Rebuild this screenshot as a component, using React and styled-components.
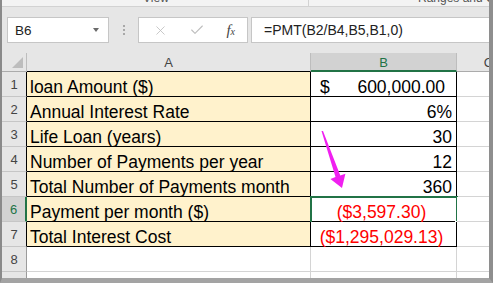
import styled, { createGlobalStyle } from 'styled-components';
import { X, Check } from 'lucide-react';

const GlobalStyle = createGlobalStyle`
  html, body {
    margin: 0;
    padding: 0;
    background: #fff;
    overflow: hidden;
  }
  * {
    box-sizing: border-box;
  }
`;

const GREEN = '#217346';
const GRID = '#d4d4d4';

const rows = [
  { label: 'loan Amount ($)', value: '600,000.00', kind: 'money' },
  { label: 'Annual Interest Rate', value: '6%' },
  { label: 'Life Loan (years)', value: '30' },
  { label: 'Number of Payments per year', value: '12' },
  { label: 'Total Number of Payments month', value: '360' },
  { label: 'Payment per month ($)', value: '($3,597.30)', kind: 'red', selected: true },
  { label: 'Total Interest Cost', value: '($1,295,029.13)', kind: 'red' },
];

const App = () => {
  return (
    <>
      <GlobalStyle />
      <Window>
        <RibbonStrip>
          <RibbonGroup $pad={141}>
            <RibbonLabel>View</RibbonLabel>
          </RibbonGroup>
          <RibbonDivider />
          <RibbonGroup $pad={109}>
            <RibbonLabel>Ranges and Conditional</RibbonLabel>
          </RibbonGroup>
        </RibbonStrip>

        <FormulaBar>
          <NameBox>
            <span>B6</span>
            <Caret />
          </NameBox>
          <Grip>
            <i />
            <i />
            <i />
          </Grip>
          <FxBox>
            <X size={15} strokeWidth={1.3} color='#bdbdbd' />
            <Check size={16} strokeWidth={1.6} color='#bdbdbd' />
            <Fx>
              f<sub>x</sub>
            </Fx>
          </FxBox>
          <FormulaInput>=PMT(B2/B4,B5,B1,0)</FormulaInput>
        </FormulaBar>

        <Sheet>
          <Corner>
            <CornerMark />
          </Corner>
          <ColHead $line='#000'>A</ColHead>
          <ColHead $selected>B</ColHead>
          <ColHead $line='#ababab'>C</ColHead>

          {rows.map((row, i) => (
            <Row key={i}>
              <RowHead $selected={row.selected} $edge='#000'>
                {i + 1}
              </RowHead>
              <Cell $fill='#fff2cc' $edge='#000' $pad='0 0 0 3px'>
                {row.label}
              </Cell>
              <Cell
                $edge='#000'
                $align={row.kind === 'red' ? 'center' : 'flex-end'}
                $color={row.kind === 'red' ? '#ff0000' : '#000'}
                $pad={row.kind === 'money' ? '0 11px 0 9px' : '0 4px 0 0'}
              >
                {row.kind === 'money' ? (
                  <>
                    <span>$</span>
                    <Spacer />
                    <span>{row.value}</span>
                  </>
                ) : (
                  row.value
                )}
                {row.selected && (
                  <Selection>
                    <FillHandle />
                  </Selection>
                )}
              </Cell>
              <Cell />
            </Row>
          ))}

          {['8', ''].map((n, i) => (
            <Row key={i}>
              <RowHead $edge='#9b9b9b'>{n}</RowHead>
              <Cell />
              <Cell />
              <Cell />
            </Row>
          ))}
        </Sheet>

        <Arrow width='40' height='70' viewBox='0 0 40 70'>
          <polygon
            points='6.5,6 8,6 25.3,50.5 30.4,48.7 27,63 15.4,53.9 20.5,52.1'
            fill='#f020f0'
          />
        </Arrow>
      </Window>
    </>
  );
};

export default App;

const Window = styled.div`
  position: relative;
  width: 493px;
  height: 283px;
  overflow: hidden;
  display: flex;
  flex-direction: column;
  background: #e6e6e6;
  border-left: 2px solid #8a8a8a;
  border-right: 4px solid #8e8e8e;
  border-bottom: 5px solid #a3a3a3;
  font-family: 'Liberation Sans', Arial, sans-serif;
`;

const RibbonStrip = styled.div`
  display: grid;
  grid-template-columns: 306px 1px 1fr;
  height: 7px;
  flex-shrink: 0;
  background: #f3f3f3;
  border-bottom: 1px solid #d2d2d2;
  overflow: hidden;
`;

const RibbonGroup = styled.div`
  padding-left: ${({ $pad }) => $pad}px;
  overflow: hidden;
`;

const RibbonLabel = styled.div`
  margin-top: -9px;
  font-size: 12px;
  line-height: 14px;
  color: #555;
  white-space: nowrap;
`;

const RibbonDivider = styled.div`
  background: #d2d2d2;
`;

const FormulaBar = styled.div`
  display: flex;
  align-items: flex-start;
  height: 46px;
  flex-shrink: 0;
  padding: 10px 0 0 5px;
`;

const NameBox = styled.div`
  display: flex;
  align-items: center;
  justify-content: space-between;
  width: 102px;
  height: 26px;
  padding: 0 9px 0 7px;
  background: #fff;
  border: 1px solid #c6c6c6;
  font-size: 13.5px;
  color: #222;
`;

const Caret = styled.div`
  width: 0;
  height: 0;
  border-left: 3.5px solid transparent;
  border-right: 3.5px solid transparent;
  border-top: 4px solid #6a6a6a;
`;

const Grip = styled.div`
  display: flex;
  flex-direction: column;
  gap: 2px;
  margin: 8px 13px 0 14px;

  i {
    display: block;
    width: 2px;
    height: 2px;
    background: #a8a8a8;
  }
`;

const FxBox = styled.div`
  display: flex;
  align-items: center;
  justify-content: space-between;
  width: 110px;
  height: 26px;
  padding: 0 12px 0 14px;
  background: #fff;
  border: 1px solid #c6c6c6;
`;

const Fx = styled.span`
  font-family: 'Liberation Serif', 'Times New Roman', serif;
  font-style: italic;
  font-size: 15px;
  color: #444;
  line-height: 1;

  sub {
    font-size: 10px;
    vertical-align: baseline;
  }
`;

const FormulaInput = styled.div`
  flex: 1;
  height: 26px;
  margin-left: 3px;
  padding-left: 12px;
  display: flex;
  align-items: center;
  background: #fff;
  border: 1px solid #c6c6c6;
  border-right: none;
  font-size: 14px;
  color: #222;
  white-space: nowrap;
`;

const Sheet = styled.div`
  display: grid;
  grid-template-columns: 25px 284px 146px 64px;
  grid-template-rows: 19px;
  grid-auto-rows: 25px;
  background: #fff;
  overflow: hidden;
`;

const Row = styled.div`
  display: contents;
`;

const Corner = styled.div`
  position: relative;
  background: #e6e6e6;
  border-right: 1px solid #bdbdbd;
  border-bottom: 1px solid #ababab;
`;

const CornerMark = styled.div`
  position: absolute;
  right: 3px;
  bottom: 3px;
  width: 0;
  height: 0;
  border-left: 11px solid transparent;
  border-bottom: 11px solid #bdbdbd;
`;

const ColHead = styled.div`
  display: flex;
  align-items: center;
  justify-content: center;
  background: ${({ $selected }) => ($selected ? '#d2d2d2' : '#e6e6e6')};
  color: ${({ $selected }) => ($selected ? GREEN : '#444')};
  border-right: 1px solid #bdbdbd;
  border-bottom: ${({ $selected, $line }) =>
    $selected ? `2px solid ${GREEN}` : `1px solid ${$line}`};
  font-size: 13px;
  padding-top: 1px;
`;

const RowHead = styled.div`
  display: flex;
  align-items: flex-end;
  justify-content: center;
  padding-bottom: 4px;
  background: ${({ $selected }) => ($selected ? '#d2d2d2' : '#e6e6e6')};
  color: ${({ $selected }) => ($selected ? GREEN : '#444')};
  border-bottom: 1px solid #c6c6c6;
  border-right: ${({ $selected, $edge }) =>
    $selected ? `2px solid ${GREEN}` : `1px solid ${$edge}`};
  font-size: 13px;
`;

const Cell = styled.div`
  position: relative;
  display: flex;
  align-items: flex-end;
  justify-content: ${({ $align }) => $align || 'flex-start'};
  padding: ${({ $pad }) => $pad || '0'};
  background: ${({ $fill }) => $fill || '#fff'};
  color: ${({ $color }) => $color || '#000'};
  border-right: 1px solid ${({ $edge }) => $edge || GRID};
  border-bottom: 1px solid ${({ $edge }) => $edge || GRID};
  font-size: 17.5px;
  line-height: 1;
  white-space: nowrap;
`;

const Spacer = styled.span`
  flex: 1;
`;

const Selection = styled.div`
  position: absolute;
  left: -1px;
  top: -1px;
  right: -2px;
  bottom: -3px;
  border: 2px solid ${GREEN};
  pointer-events: none;
`;

const FillHandle = styled.div`
  position: absolute;
  right: -5px;
  bottom: -5px;
  width: 6px;
  height: 6px;
  background: ${GREEN};
  border: 1px solid #fff;
`;

const Arrow = styled.svg`
  position: absolute;
  left: 313px;
  top: 125px;
`;
